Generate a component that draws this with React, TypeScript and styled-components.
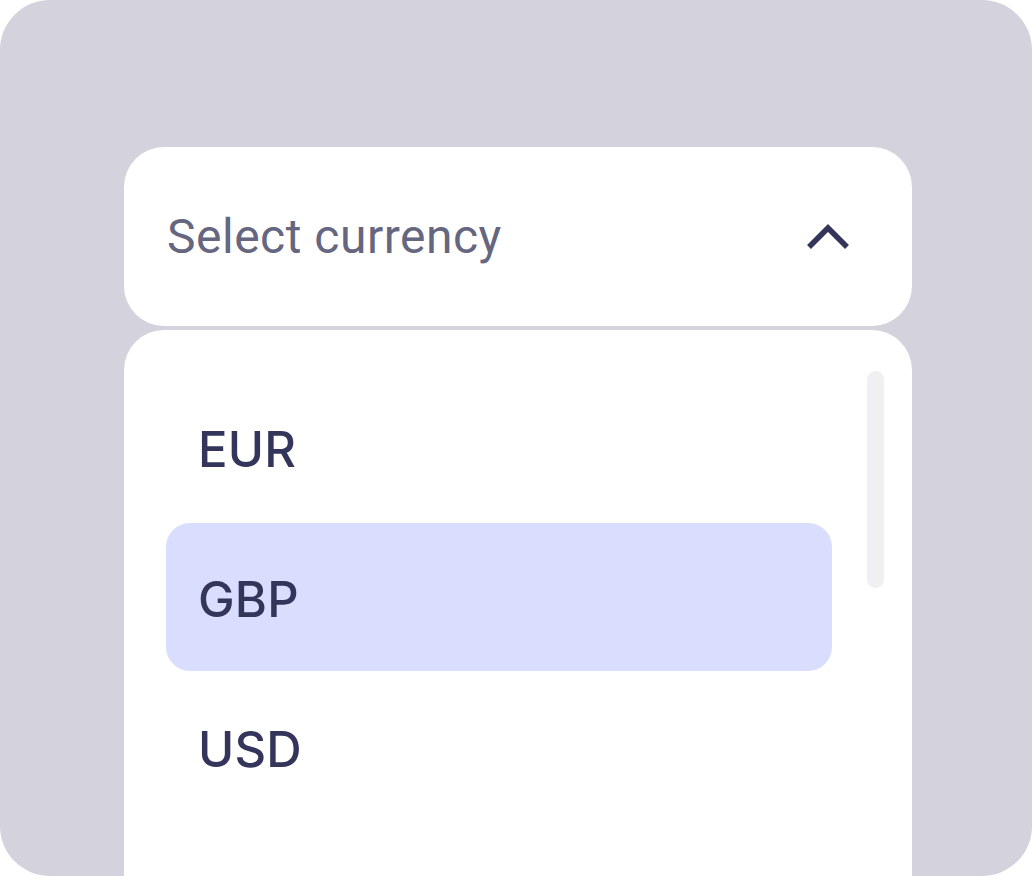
import React from "react";
import styled, { createGlobalStyle } from "styled-components";

const Global = createGlobalStyle`
  html, body { margin: 0; padding: 0; background: #ffffff; }
  body { width: 1032px; height: 876px; overflow: hidden; }
`;

const Panel = styled.div`
  box-sizing: border-box;
  width: 1032px;
  height: 876px;
  border-radius: 50px;
  background: #d4d3dd;
  overflow: hidden;
  padding: 147px 120px 0 124px;
  display: flex;
  flex-direction: column;
  gap: 4px;
`;

const Trigger = styled.div`
  box-sizing: border-box;
  height: 179px;
  background: #ffffff;
  border-radius: 40px;
  display: flex;
  align-items: center;
  justify-content: space-between;
  padding: 0 62px 0 43px;
`;

const Placeholder = styled.span`
  font-family: Roboto, "Liberation Sans", sans-serif;
  font-size: 48px;
  font-weight: 400;
  color: #65667f;
  letter-spacing: 0.5px;
`;

const Chevron = styled.svg`
  width: 44px;
  height: 28px;
  display: block;
`;

const ListCard = styled.div`
  box-sizing: border-box;
  flex: 1;
  background: #ffffff;
  border-radius: 40px 40px 0 0;
  padding: 43px 28px 0 42px;
  display: grid;
  grid-template-columns: 1fr 17px;
  column-gap: 35px;
  align-items: start;
`;

const Options = styled.div`
  display: flex;
  flex-direction: column;
  gap: 2px;
`;

const Option = styled.div<{ $active?: boolean }>`
  box-sizing: border-box;
  height: 148px;
  border-radius: 24px;
  background: ${(p) => (p.$active ? "#d9defe" : "transparent")};
  display: flex;
  align-items: center;
  padding: 4px 0 0 32px;
  font-family: Inter, "Noto Sans", sans-serif;
  font-size: 49px;
  font-weight: 500;
  color: #33355a;
  letter-spacing: 0.2px;
`;

const Track = styled.div`
  height: 217px;
  margin-top: -2px;
  border-radius: 9px;
  background: #efeff4;
`;

export default function App() {
  return (
    <>
      <Global />
      <Panel>
        <Trigger>
          <Placeholder>Select currency</Placeholder>
          <Chevron viewBox="0 0 44 28">
            <polyline
              points="3,24 22,5 41,24"
              fill="none"
              stroke="#33365a"
              strokeWidth="5.5"
              strokeLinecap="butt"
              strokeLinejoin="miter"
            />
          </Chevron>
        </Trigger>
        <ListCard>
          <Options>
            <Option>EUR</Option>
            <Option $active>GBP</Option>
            <Option>USD</Option>
          </Options>
          <Track />
        </ListCard>
      </Panel>
    </>
  );
}
